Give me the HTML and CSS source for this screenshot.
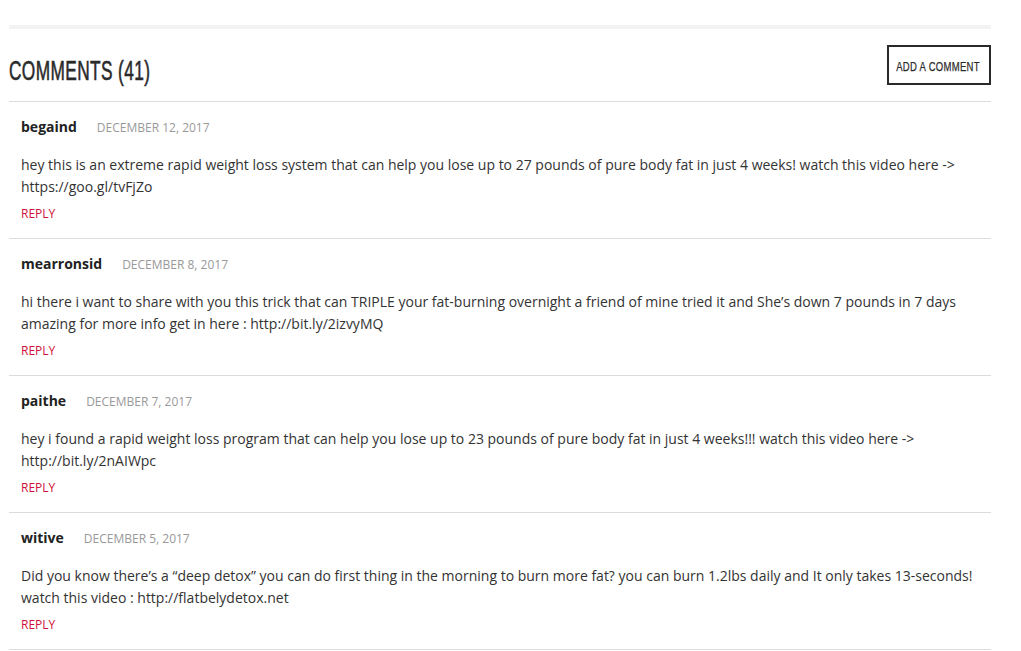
FILE: index.html
```html
<!DOCTYPE html>
<html>
<head>
<meta charset="utf-8">
<link rel="stylesheet" href="styles.css">
</head>
<body>
<div class="page">
  <div class="topbar"></div>
  <div class="header">
    <h2 class="title"><span class="cond">COMMENTS (41)</span></h2>
    <a class="add-btn"><span class="cond">ADD A COMMENT</span></a>
  </div>
  <ul class="comments">
    <li class="comment">
      <div class="meta"><span class="name">begaind</span><span class="date">DECEMBER 12, 2017</span></div>
      <p class="body">hey this is an extreme rapid weight loss system that can help you lose up to 27 pounds of pure body fat in just 4 weeks! watch this video here -&gt; https://goo.gl/tvFjZo</p>
      <a class="reply">REPLY</a>
    </li>
    <li class="comment">
      <div class="meta"><span class="name">mearronsid</span><span class="date">DECEMBER 8, 2017</span></div>
      <p class="body">hi there i want to share with you this trick that can TRIPLE your fat-burning overnight a friend of mine tried it and She’s down 7 pounds in 7 days amazing for more info get in here : http://bit.ly/2izvyMQ</p>
      <a class="reply">REPLY</a>
    </li>
    <li class="comment">
      <div class="meta"><span class="name">paithe</span><span class="date">DECEMBER 7, 2017</span></div>
      <p class="body">hey i found a rapid weight loss program that can help you lose up to 23 pounds of pure body fat in just 4 weeks!!! watch this video here -&gt; http://bit.ly/2nAIWpc</p>
      <a class="reply">REPLY</a>
    </li>
    <li class="comment">
      <div class="meta"><span class="name">witive</span><span class="date">DECEMBER 5, 2017</span></div>
      <p class="body">Did you know there’s a “deep detox” you can do first thing in the morning to burn more fat? you can burn 1.2lbs daily and It only takes 13-seconds! watch this video : http://flatbelydetox.net</p>
      <a class="reply">REPLY</a>
    </li>
  </ul>
</div>
</body>
</html>
```
FILE: styles.css
```css
html, body {
  margin: 0;
  padding: 0;
  background: #fff;
}
body {
  font-family: "Open Sans", "Liberation Sans", sans-serif;
  color: #333;
}
.page {
  width: 982px;
  margin-left: 9px;
  padding-top: 25px;
}
.topbar {
  height: 4px;
  background: #f3f3f3;
}
.header {
  display: flex;
  justify-content: space-between;
  align-items: center;
  padding-top: 16px;
  padding-bottom: 16px;
  border-bottom: 1px solid #dcdcdc;
}
.title {
  margin: 0;
  font-family: "Liberation Sans", Arial, sans-serif;
  font-weight: normal;
  font-size: 27px;
  line-height: 30px;
  color: #2a2a2a;
  padding-top: 9px;
  margin-bottom: -3px;
  -webkit-text-stroke: 0.6px #2a2a2a;
}
.title .cond {
  display: inline-block;
  transform: scaleX(0.64);
  transform-origin: left center;
  letter-spacing: 0.6px;
}
.add-btn {
  display: block;
  box-sizing: border-box;
  height: 40px;
  width: 104px;
  border: 2px solid #2a2a2a;
  padding-top: 4px;
  font-family: "Liberation Sans", Arial, sans-serif;
  font-size: 12.5px;
  line-height: 32px;
  text-align: center;
  color: #2a2a2a;
  white-space: nowrap;
  -webkit-text-stroke: 0.25px #2a2a2a;
}
.add-btn .cond {
  display: inline-block;
  transform: scaleX(0.76);
  transform-origin: center center;
  margin-left: -6px;
  letter-spacing: 0.4px;
}
.comments {
  list-style: none;
  margin: 0;
  padding: 0;
}
.comment {
  padding: 15px 12px 16px;
  border-bottom: 1px solid #dcdcdc;
}
.meta {
  display: flex;
  align-items: baseline;
  line-height: 20px;
}
.name {
  font-weight: 700;
  font-size: 14px;
  color: #222;
}
.date {
  margin-left: 20px;
  font-size: 12px;
  color: #999;
}
.body {
  margin: 16px 0 0;
  font-size: 14px;
  line-height: 22px;
  color: #333;
}
.reply {
  display: block;
  margin-top: 8px;
  font-size: 12px;
  line-height: 16px;
  color: #d0103a;
}
```
